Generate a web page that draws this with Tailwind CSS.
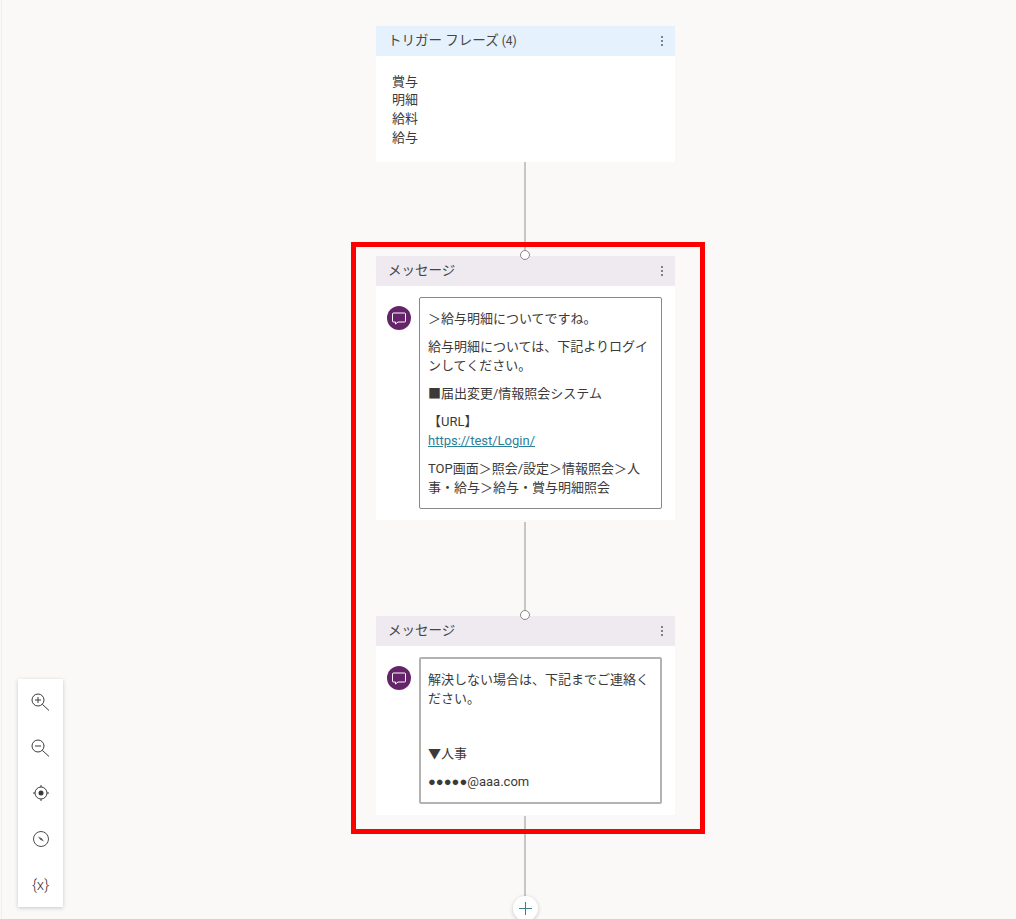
<!DOCTYPE html>
<html lang="ja">
<head>
    <meta charset="UTF-8">
    <title>Topic canvas</title>
    <script src="https://cdn.jsdelivr.net/npm/@tailwindcss/browser@4"></script>
</head>
<body class="bg-[#faf9f8] text-[#3b3a39] text-[13px] leading-[19px] font-['Roboto','Noto_Sans_CJK_JP',sans-serif] overflow-hidden">
<div class="relative h-[919px] w-[1016px] overflow-hidden">

    <!-- canvas left edge -->
    <div class="absolute left-px top-0 h-full w-px bg-[#efeeed]"></div>

    <!-- flow column -->
    <div class="ml-[376px] w-[299px] pt-[26px] flex flex-col">

        <!-- trigger node -->
        <div class="bg-white h-[136px]">
            <div class="h-[30px] bg-[#e5f2fe] flex items-center justify-between pl-3 pr-[11px]">
                <span class="text-[13.5px] text-[#484644] -mt-px">トリガー フレーズ<span class="text-[12px] ml-[3px]">(4)</span></span>
                <svg width="4" height="12" viewBox="0 0 4 12" class="text-[#605e5c]" fill="currentColor"><circle cx="2" cy="2" r="1"/><circle cx="2" cy="6" r="1"/><circle cx="2" cy="10" r="1"/></svg>
            </div>
            <div class="pt-[16.5px] pl-4 leading-[18.7px]">
                <p>賞与</p>
                <p>明細</p>
                <p>給料</p>
                <p>給与</p>
            </div>
        </div>

        <!-- connector -->
        <div class="relative h-[94px]">
            <div class="absolute left-[148px] top-0 h-[88px] w-[2px] bg-[#c8c6c4]"></div>
            <div class="absolute left-[144px] top-[88px] z-10 size-[10px] rounded-full border-[1.5px] border-[#8a8886] bg-white"></div>
        </div>

        <!-- message 1 -->
        <div class="bg-white h-[264px]">
            <div class="h-[30px] bg-[#efe9f0] flex items-center justify-between pl-3 pr-[11px]">
                <span class="text-[13.5px] text-[#484644] -mt-[2px]">メッセージ</span>
                <svg width="4" height="12" viewBox="0 0 4 12" class="text-[#605e5c]" fill="currentColor"><circle cx="2" cy="2" r="1"/><circle cx="2" cy="6" r="1"/><circle cx="2" cy="10" r="1"/></svg>
            </div>
            <div class="flex pt-[11px] pl-[11px]">
                <div class="mt-[9px] size-6 rounded-full bg-[#652469] flex items-center justify-center shrink-0">
                    <svg width="16" height="16" viewBox="0 0 16 16" fill="none" stroke="white" stroke-width="1"><path d="M2.5 3h11a1 1 0 0 1 1 1v7a1 1 0 0 1-1 1H7l-2.5 2v-2h-2a1 1 0 0 1-1-1V4a1 1 0 0 1 1-1z"/></svg>
                </div>
                <div class="ml-2 w-[243px] h-[212px] rounded-[2px] border border-[#8a8886] pt-[11px] pl-2 pr-2 flex flex-col gap-[9px]">
                    <p>＞給与明細についてですね。</p>
                    <p>給与明細については、下記よりログインしてください。</p>
                    <p>■届出変更/情報照会システム</p>
                    <p>【URL】<br><a class="text-[#2a7f9a] underline">https://test/Login/</a></p>
                    <p>TOP画面＞照会/設定＞情報照会＞人事・給与＞給与・賞与明細照会</p>
                </div>
            </div>
        </div>

        <!-- connector -->
        <div class="relative h-[96px]">
            <div class="absolute left-[148px] top-[2px] h-[88px] w-[2px] bg-[#c8c6c4]"></div>
            <div class="absolute left-[144px] top-[90px] z-10 size-[10px] rounded-full border-[1.5px] border-[#8a8886] bg-white"></div>
        </div>

        <!-- message 2 -->
        <div class="bg-white h-[199px]">
            <div class="h-[30px] bg-[#efe9f0] flex items-center justify-between pl-3 pr-[11px]">
                <span class="text-[13.5px] text-[#484644] -mt-[2px]">メッセージ</span>
                <svg width="4" height="12" viewBox="0 0 4 12" class="text-[#605e5c]" fill="currentColor"><circle cx="2" cy="2" r="1"/><circle cx="2" cy="6" r="1"/><circle cx="2" cy="10" r="1"/></svg>
            </div>
            <div class="flex pt-[11px] pl-[11px]">
                <div class="mt-[9px] size-6 rounded-full bg-[#652469] flex items-center justify-center shrink-0">
                    <svg width="16" height="16" viewBox="0 0 16 16" fill="none" stroke="white" stroke-width="1"><path d="M2.5 3h11a1 1 0 0 1 1 1v7a1 1 0 0 1-1 1H7l-2.5 2v-2h-2a1 1 0 0 1-1-1V4a1 1 0 0 1 1-1z"/></svg>
                </div>
                <div class="ml-2 w-[243px] h-[147px] rounded-[2px] border-2 border-[#b3b2b1] pt-[11px] pl-[7px] pr-[7px] flex flex-col gap-[9px]">
                    <p>解決しない場合は、下記までご連絡ください。</p>
                    <p class="h-[18px]"></p>
                    <p>▼人事</p>
                    <p><span class="font-['Liberation_Sans',sans-serif]">●●●●●</span>@aaa.com</p>
                </div>
            </div>
        </div>

        <!-- connector to add button -->
        <div class="relative h-[82px]">
            <div class="absolute left-[148px] top-[1px] h-[81px] w-[2px] bg-[#c8c6c4]"></div>
        </div>
    </div>

    <!-- add button -->
    <div class="absolute left-[513px] top-[896px] size-[25px] rounded-full bg-white shadow-[0_1px_4px_rgba(0,0,0,0.2)] flex items-center justify-center">
        <svg width="15" height="15" viewBox="0 0 15 15" stroke="#3f7f92" stroke-width="1"><path d="M7.5 1v13M1 7.5h13"/></svg>
    </div>

    <!-- red highlight -->
    <div class="absolute left-[351px] top-[242px] w-[354px] h-[592px] border-[5px] border-[#ff0000] z-20"></div>

    <!-- zoom toolbar -->
    <div class="absolute left-[18px] top-[679px] w-[45px] h-[228px] bg-white shadow-[0_1px_4px_rgba(0,0,0,0.2)] flex flex-col items-center pt-[13px] text-[#3b3a39]">
        <div class="h-[46px] w-full flex justify-start pl-[12px]">
            <svg width="20" height="20" viewBox="0 0 20 20" fill="none" stroke="currentColor"><circle cx="8" cy="8" r="6"/><path d="M12.3 12.3l6.7 6.2M8 5v6M5 8h6"/></svg>
        </div>
        <div class="h-[46px] w-full flex justify-start pl-[12px]">
            <svg width="20" height="20" viewBox="0 0 20 20" fill="none" stroke="currentColor"><circle cx="8" cy="8" r="6"/><path d="M12.3 12.3l6.7 6.2M5 8h6"/></svg>
        </div>
        <div class="h-[46px] w-full flex justify-center">
            <svg width="18" height="18" viewBox="0 0 18 18" fill="none" stroke="currentColor"><circle cx="9" cy="9" r="6"/><circle cx="9" cy="9" r="2.5" fill="currentColor" stroke="none"/><path d="M9 1v2M9 15v2M1 9h2M15 9h2"/></svg>
        </div>
        <div class="h-[46px] w-full flex justify-center">
            <svg width="18" height="18" viewBox="0 0 18 18" fill="none" stroke="currentColor"><circle cx="9" cy="9" r="7.5" stroke-width="0.9"/><path d="M6 6.5l3.8 1.7 2.2 3.3-3.8-1.7z" fill="#605e5c" stroke="none"/></svg>
        </div>
        <div class="text-[15px] leading-[19px] font-light">{x}</div>
    </div>
</div>
</body>
</html>
